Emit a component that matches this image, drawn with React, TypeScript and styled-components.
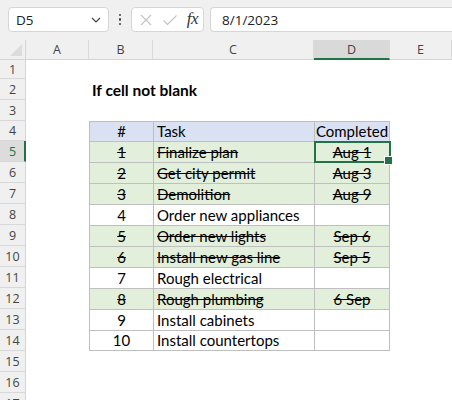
import styled, { createGlobalStyle } from 'styled-components';

const GlobalStyle = createGlobalStyle`
  html, body {
    margin: 0;
    padding: 0;
    background: #ffffff;
    overflow: hidden;
  }
  * {
    box-sizing: border-box;
  }
`;

const GREEN = '#217346';
const LINE = '#bfbfbf';

const Page = styled.div`
  width: 452px;
  height: 400px;
  overflow: hidden;
  background: #ffffff;
`;

const Toolbar = styled.div`
  height: 40px;
  display: flex;
  align-items: center;
  padding: 0 0 1px 8px;
  background: #f0f0f0;
  font-family: 'Open Sans', 'Noto Sans', sans-serif;
`;

const NameBox = styled.div`
  width: 101px;
  height: 25px;
  display: flex;
  align-items: center;
  justify-content: space-between;
  padding: 0 7px 0 7px;
  background: #ffffff;
  border: 1px solid #d6d6d6;
  border-radius: 4px;
  font-size: 13.5px;
  color: #222;
`;

const Dots = styled.div`
  width: 22px;
  display: flex;
  flex-direction: column;
  align-items: center;
  gap: 2px;
  span {
    width: 2.5px;
    height: 2.5px;
    border-radius: 50%;
    background: #444;
  }
`;

const FxBox = styled.div`
  width: 73px;
  height: 25px;
  display: flex;
  align-items: center;
  justify-content: space-between;
  padding: 0 5px 0 7px;
  background: #ffffff;
  border: 1px solid #d6d6d6;
  border-radius: 4px;
`;

const FxLabel = styled.span`
  font-family: 'Liberation Serif', 'DejaVu Serif', serif;
  font-style: italic;
  font-size: 17px;
  color: #333;
  letter-spacing: -0.5px;
  margin-top: -2px;
`;

const FormulaInput = styled.div`
  flex: 1;
  height: 25px;
  margin-left: 6px;
  display: flex;
  align-items: center;
  padding-left: 11px;
  background: #ffffff;
  border: 1px solid #d6d6d6;
  border-right: none;
  border-radius: 4px 0 0 4px;
  font-size: 13.5px;
  color: #222;
`;

const Row = styled.div<{ $h: number }>`
  display: flex;
  height: ${(p) => p.$h}px;
`;

const Corner = styled.div`
  width: 26px;
  height: 100%;
  background: #f0f0f0;
  border-right: 1px solid #d4d4d4;
  border-bottom: 1px solid #d4d4d4;
  position: relative;
  &::after {
    content: '';
    position: absolute;
    right: 3px;
    bottom: 3px;
    width: 0;
    height: 0;
    border-left: 12px solid transparent;
    border-bottom: 12px solid #dcdcdc;
  }
`;

const ColHead = styled.div<{ $w?: number; $active?: boolean }>`
  ${(p) => (p.$w ? `width: ${p.$w}px;` : 'flex: 1;')}
  height: 100%;
  display: flex;
  align-items: center;
  justify-content: center;
  font-family: 'Open Sans', 'Noto Sans', sans-serif;
  font-size: 12.5px;
  color: #444;
  background: ${(p) => (p.$active ? '#d9d9d9' : '#f0f0f0')};
  border-right: 1px solid #dadada;
  border-bottom: ${(p) => (p.$active ? `2px solid ${GREEN}` : '1px solid #d4d4d4')};
  padding-top: ${(p) => (p.$active ? '1px' : '0')};
`;

const RowHead = styled.div<{ $active?: boolean }>`
  width: 26px;
  height: 100%;
  display: flex;
  align-items: center;
  justify-content: center;
  font-family: 'Open Sans', 'Noto Sans', sans-serif;
  font-size: 12.5px;
  color: ${(p) => (p.$active ? GREEN : '#444')};
  background: ${(p) => (p.$active ? '#dcdcdc' : '#f0f0f0')};
  border-bottom: 1px solid #d8d8d8;
  border-right: ${(p) => (p.$active ? `2px solid ${GREEN}` : '1px solid #d4d4d4')};
  padding-left: ${(p) => (p.$active ? '1px' : '0')};
`;

const Cell = styled.div<{
  $w?: number;
  $bg?: string;
  $align?: 'left' | 'center';
  $strike?: boolean;
  $bold?: boolean;
  $left?: boolean;
  $top?: boolean;
  $right?: boolean;
  $bottom?: boolean;
  $raise?: boolean;
}>`
  ${(p) => (p.$w ? `width: ${p.$w}px;` : 'flex: 1;')}
  height: 100%;
  position: relative;
  z-index: ${(p) => (p.$raise ? 2 : 'auto')};
  display: flex;
  align-items: flex-end;
  justify-content: ${(p) => (p.$align === 'center' ? 'center' : 'flex-start')};
  padding: 0 3px 0 3px;
  background: ${(p) => p.$bg || 'transparent'};
  border-left: ${(p) => (p.$left ? `1px solid ${LINE}` : 'none')};
  border-top: ${(p) => (p.$top ? `1px solid ${LINE}` : 'none')};
  border-right: ${(p) => (p.$right ? `1px solid ${LINE}` : 'none')};
  border-bottom: ${(p) => (p.$bottom ? `1px solid ${LINE}` : 'none')};
  font-family: Lato, 'Open Sans', sans-serif;
  font-size: ${(p) => (p.$bold ? '15.5px' : '15px')};
  line-height: 19px;
  color: #000;
  white-space: nowrap;
  overflow: visible;
  font-weight: ${(p) => (p.$bold ? 700 : 400)};
  text-decoration: ${(p) => (p.$strike ? 'line-through' : 'none')};
`;

const Selection = styled.div`
  position: absolute;
  left: -1px;
  top: -1px;
  right: -2px;
  bottom: -1px;
  border: 2px solid ${GREEN};
  pointer-events: none;
  z-index: 3;
  &::after {
    content: '';
    position: absolute;
    right: -4px;
    bottom: -4px;
    width: 7px;
    height: 7px;
    background: ${GREEN};
    border: 1px solid #ffffff;
  }
`;

const COLS = { A: 63, B: 64, C: 161, D: 76 };
const HEIGHTS = [19, 21, 21, 20, 21, 21, 21, 21, 21, 21, 21, 21, 21, 21, 21, 21, 21];

type Task = { n: number; task: string; done?: string };

const tasks: Task[] = [
  { n: 1, task: 'Finalize plan', done: 'Aug 1' },
  { n: 2, task: 'Get city permit', done: 'Aug 3' },
  { n: 3, task: 'Demolition', done: 'Aug 9' },
  { n: 4, task: 'Order new appliances' },
  { n: 5, task: 'Order new lights', done: 'Sep 6' },
  { n: 6, task: 'Install new gas line', done: 'Sep 5' },
  { n: 7, task: 'Rough electrical' },
  { n: 8, task: 'Rough plumbing', done: '6 Sep' },
  { n: 9, task: 'Install cabinets' },
  { n: 10, task: 'Install countertops' },
];

function XIcon() {
  return (
    <svg width="14" height="14" viewBox="0 0 14 14">
      <path d="M2 2 L12 12 M12 2 L2 12" stroke="#c4c4c4" strokeWidth="1.2" fill="none" />
    </svg>
  );
}

function CheckIcon() {
  return (
    <svg width="16" height="14" viewBox="0 0 16 14">
      <path d="M1.5 7.5 L5.5 11.5 L14.5 2.5" stroke="#c4c4c4" strokeWidth="1.2" fill="none" />
    </svg>
  );
}

function Chevron() {
  return (
    <svg width="10" height="6" viewBox="0 0 10 6">
      <path d="M1 1 L5 5 L9 1" stroke="#444" strokeWidth="1.2" fill="none" />
    </svg>
  );
}

function EmptyRow({ r }: { r: number }) {
  return (
    <Row $h={HEIGHTS[r - 1]}>
      <RowHead>{r}</RowHead>
      <Cell $w={COLS.A} />
      <Cell $w={COLS.B} />
      <Cell $w={COLS.C} />
      <Cell $w={COLS.D} />
      <Cell />
    </Row>
  );
}

export default function App() {
  return (
    <Page>
      <GlobalStyle />
      <Toolbar>
        <NameBox>
          <span>D5</span>
          <Chevron />
        </NameBox>
        <Dots>
          <span />
          <span />
          <span />
        </Dots>
        <FxBox>
          <XIcon />
          <CheckIcon />
          <FxLabel>fx</FxLabel>
        </FxBox>
        <FormulaInput>8/1/2023</FormulaInput>
      </Toolbar>

      <Row $h={20}>
        <Corner />
        <ColHead $w={COLS.A}>A</ColHead>
        <ColHead $w={COLS.B}>B</ColHead>
        <ColHead $w={COLS.C}>C</ColHead>
        <ColHead $w={COLS.D} $active>D</ColHead>
        <ColHead>E</ColHead>
      </Row>

      <EmptyRow r={1} />
      <Row $h={HEIGHTS[1]}>
        <RowHead>2</RowHead>
        <Cell $w={COLS.A} />
        <Cell $w={COLS.B} $bold $raise>If cell not blank</Cell>
        <Cell $w={COLS.C} />
        <Cell $w={COLS.D} />
        <Cell />
      </Row>
      <EmptyRow r={3} />

      <Row $h={HEIGHTS[3]}>
        <RowHead>4</RowHead>
        <Cell $w={COLS.A} />
        <Cell $w={COLS.B} $bg="#d9e1f2" $align="center" $left $top>#</Cell>
        <Cell $w={COLS.C} $bg="#d9e1f2" $left $top>Task</Cell>
        <Cell $w={COLS.D} $bg="#d9e1f2" $align="center" $left $top $right>Completed</Cell>
        <Cell />
      </Row>

      {tasks.map((t, i) => {
        const r = i + 5;
        const bg = t.done ? '#e2efda' : '#ffffff';
        const last = i === tasks.length - 1;
        return (
          <Row key={t.n} $h={HEIGHTS[r - 1]}>
            <RowHead $active={r === 5}>{r}</RowHead>
            <Cell $w={COLS.A} />
            <Cell $w={COLS.B} $bg={bg} $align="center" $strike={!!t.done} $left $top $bottom={last}>
              {t.n}
            </Cell>
            <Cell $w={COLS.C} $bg={bg} $strike={!!t.done} $left $top $bottom={last}>
              {t.task}
            </Cell>
            <Cell
              $w={COLS.D}
              $bg={bg}
              $align="center"
              $strike={!!t.done}
              $left
              $top
              $right
              $bottom={last}
              $raise={r === 5}
            >
              {t.done}
              {r === 5 && <Selection />}
            </Cell>
            <Cell />
          </Row>
        );
      })}

      <EmptyRow r={15} />
      <EmptyRow r={16} />
      <EmptyRow r={17} />
    </Page>
  );
}
